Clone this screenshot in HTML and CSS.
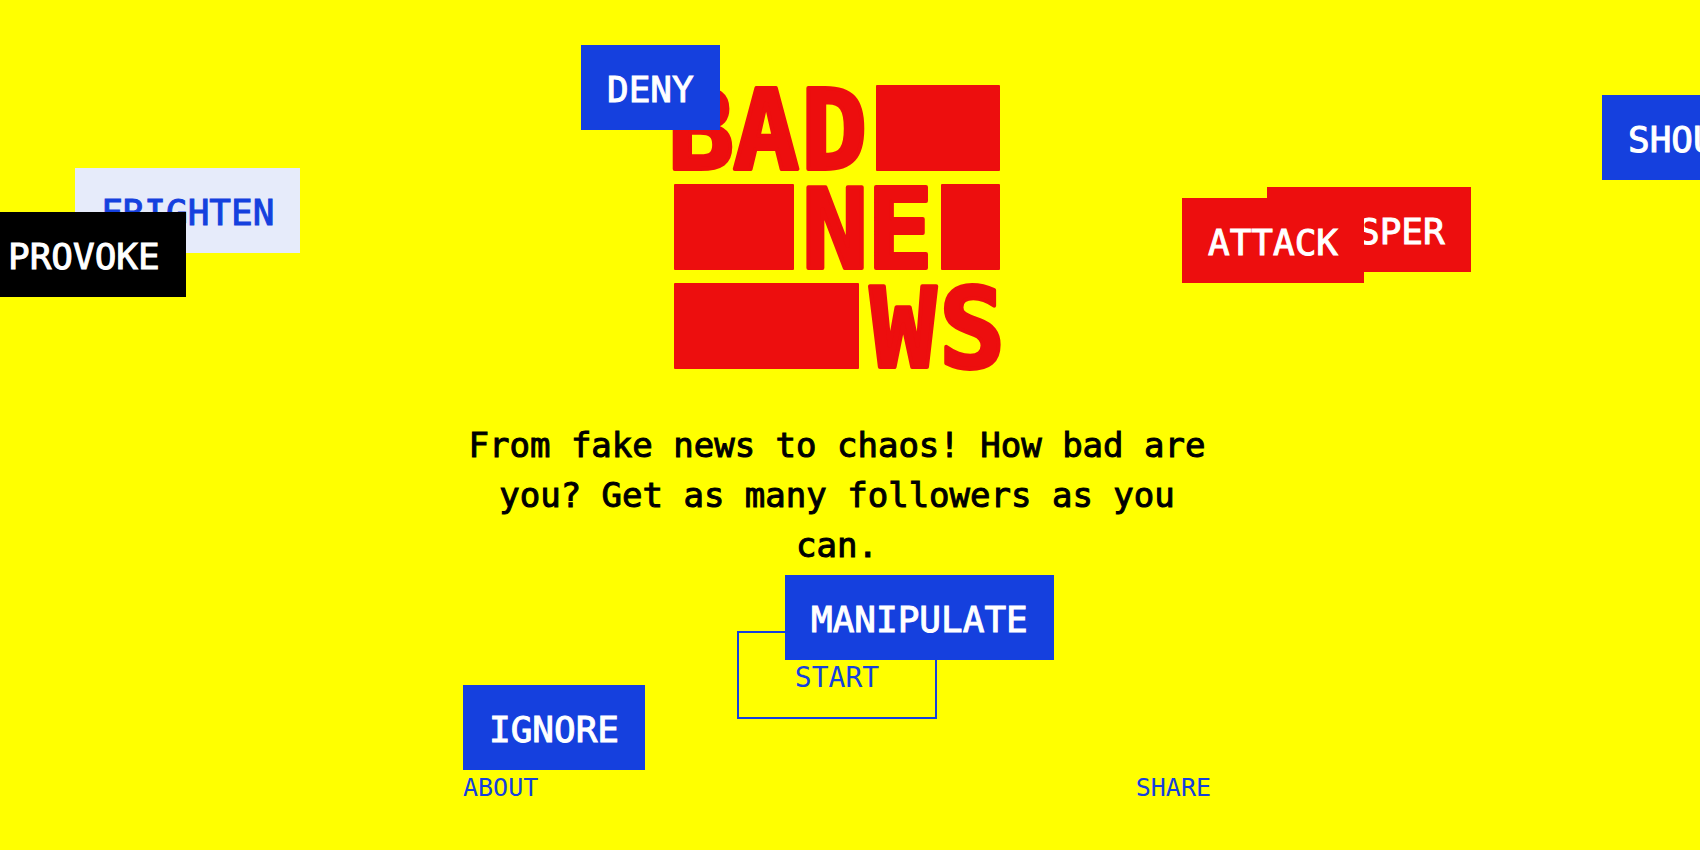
FILE: index.html
```html
<!DOCTYPE html>
<html lang="en">
<head>
  <meta charset="UTF-8">
  <meta name="viewport" content="width=device-width, initial-scale=1">
  <title>Bad News</title>
  <link rel="stylesheet" href="styles.css">
</head>
<body>
  <main class="intro">
    <h1 class="title">
      <svg class="logo" viewBox="0 0 326 284" role="img" aria-label="Bad News">
        <rect x="202" y="0" width="124" height="86" rx="1"/>
        <rect x="0" y="99" width="120" height="86" rx="1"/>
        <rect x="267" y="99" width="59" height="86" rx="1"/>
        <rect x="0" y="198" width="185" height="86" rx="1"/>
        <text x="27 92 160" y="84">BAD</text>
        <text x="161 226" y="183">NE</text>
        <text x="229 298" y="282">WS</text>
      </svg>
    </h1>
    <p class="tagline">From fake news to chaos! How bad are you? Get as many followers as you can.</p>
    <button class="start" type="button">START</button>
    <nav class="links">
      <a href="#about">ABOUT</a>
      <a href="#share">SHARE</a>
    </nav>
  </main>

  <!-- floating words -->
  <div class="words">
    <span class="word blue deny">DENY</span>
    <span class="word blue shout">SHOUT</span>
    <span class="word light frighten">FRIGHTEN</span>
    <span class="word black provoke">PROVOKE</span>
    <span class="word red whisper">WHISPER</span>
    <span class="word red attack">ATTACK</span>
    <span class="word blue manipulate">MANIPULATE</span>
    <span class="word blue ignore">IGNORE</span>
  </div>
</body>
</html>
```
FILE: styles.css
```css
* { box-sizing: border-box; }

body {
  margin: 0;
  min-height: 100vh;
  background: #ffff00;
  color: #000;
  font-family: "DejaVu Sans Mono", monospace;
  overflow: hidden;
}

.intro {
  display: flex;
  flex-direction: column;
  align-items: center;
  padding: 85px 26px 0 0;
}

.title { margin: 0; line-height: 0; }
.logo { width: 326px; fill: #ed0e0e; overflow: visible; }
.logo text {
  font-size: 110px;
  font-weight: bold;
  text-anchor: middle;
  stroke: #ed0e0e;
  stroke-width: 4;
  stroke-linejoin: round;
}

.tagline {
  width: 44vw;
  min-width: 320px;
  margin: 51px 0 0;
  font-size: 34px;
  line-height: 50px;
  text-align: center;
  -webkit-text-stroke: 1px;
}

.start {
  width: 200px;
  height: 88px;
  margin-top: 61px;
  padding: 4px 0 0;
  border: 2px solid #1540de;
  background: none;
  color: #1540de;
  font-family: inherit;
  font-size: 28px;
  cursor: pointer;
}
.start:hover { background: #1540de; color: #fff; }

.links {
  display: flex;
  justify-content: space-between;
  width: 44vw;
  min-width: 320px;
  margin-top: 53px;
  font-size: 25px;
  line-height: 32px;
}
.links a { color: #1540de; text-decoration: none; }

.words {
  position: absolute;
  inset: 0;
  overflow: hidden;
  pointer-events: none;
}

.word {
  position: absolute;
  padding: 23px 26px 19px;
  font-size: 36px;
  line-height: 43px;
  white-space: nowrap;
  -webkit-text-stroke: 1px;
}

.blue { background: #1540de; color: #fff; }
.light { background: #e6ebfa; color: #1540de; }
.black { background: #000; color: #fff; }
.red { background: #ed0e0e; color: #fff; }

.deny { left: 581px; top: 45px; }
.shout { left: 1602px; top: 95px; }
.frighten { left: 75px; top: 168px; }
.provoke { left: -18px; top: 212px; }
.whisper { left: 1267px; top: 187px; }
.attack { left: 1182px; top: 198px; }
.manipulate { left: 785px; top: 575px; }
.ignore { left: 463px; top: 685px; }
```
